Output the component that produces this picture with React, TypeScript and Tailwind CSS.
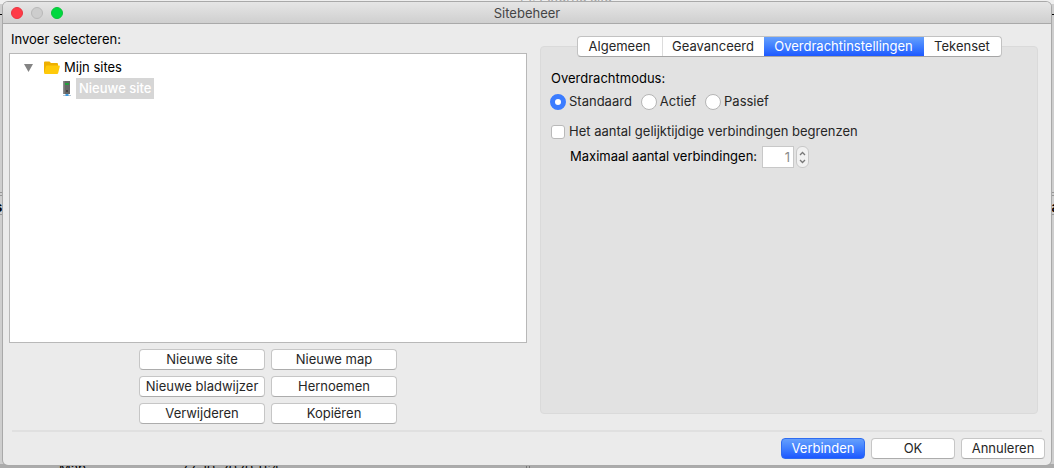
import { useState, type ReactNode } from 'react';

const TABS = [
  { label: 'Algemeen', width: 'w-[85px]' },
  { label: 'Geavanceerd', width: 'w-[101px]' },
  { label: 'Overdrachtinstellingen', width: 'w-[160px]' },
  { label: 'Tekenset', width: 'w-[77px]' },
];

const SITE_ACTIONS = ['Nieuwe site', 'Nieuwe map', 'Nieuwe bladwijzer', 'Hernoemen', 'Verwijderen', 'Kopiëren'];

const MODES = ['Standaard', 'Actief', 'Passief'];

function PushButton({ primary = false, width, children }: { primary?: boolean; width: string; children: ReactNode }) {
  return (
    <button
      type="button"
      className={`${width} flex h-[21px] items-center justify-center rounded border whitespace-nowrap ${
        primary
          ? 'border-[#2f6cf0] bg-linear-to-b from-[#659ffc] to-[#1e57ff] text-white'
          : 'border-[#c6c6c6] border-b-[#acacac] bg-white text-[#262626]'
      }`}
    >
      {children}
    </button>
  );
}

function FolderIcon() {
  return (
    <svg width="16" height="14" viewBox="0 0 16 14" aria-hidden="true">
      <path d="M1 .5h4.500l1.500 1.500H13q1 0 1 1V12H1q-1 0-1-1V1.500q0-1 1-1z" fill="#eeb000" />
      <path d="M3 4.500h12q1 0 .8 1l-1.600 6.500q-.2 1-1.200 1H1q-1 0-.8-1l1.600-6.500q.2-1 1.200-1z" fill="#ffca0a" />
    </svg>
  );
}

function ServerIcon() {
  return (
    <svg width="10" height="16" viewBox="0 0 10 16" aria-hidden="true">
      <path d="M1 0h7v13H1z" fill="#666" />
      <path d="M1 0h1.500v13H1z" fill="#8c8c8c" />
      <path d="M3 2h4v2H3z" fill="#23a03c" />
      <path d="M4 9h2v2H4z" fill="#444" />
      <path d="M1 14.500h8" stroke="#b4c4d2" />
      <path d="M3.500 13h3v2h-3z" fill="#3c9ae0" />
    </svg>
  );
}

// Sliver of the main window that stays visible around the dialog
function Backdrop() {
  return (
    <div className="absolute inset-0 overflow-hidden bg-[#cecece]" aria-hidden="true">
      <div className="absolute inset-x-0 top-0 h-1 bg-[#efefef]" />
      <div className="absolute inset-x-0 top-[14px] h-px bg-black" />
      <div className="absolute inset-x-0 top-[192px] h-1 border-y border-[#979797]" />
      <div className="absolute inset-x-0 top-[214px] h-px bg-[#979797]" />
      <div className="absolute inset-x-0 bottom-0 h-1 bg-[#ababab]" />
      <span className="absolute -top-3 left-[520px] text-[#a0a0a0]">□: Externe site</span>
      <span className="absolute top-[198px] -left-[5px] font-bold text-black">s</span>
      <span className="absolute top-[198px] -right-[5px] font-bold text-black">a</span>
      <span className="absolute -bottom-[10px] left-[59px] text-black">Map</span>
      <span className="absolute -bottom-[10px] left-[180px] text-black">22-10-2020 11:4</span>
      <div className="absolute bottom-0 left-[526px] h-1 w-1 border-x border-[#777]" />
    </div>
  );
}

function SiteList() {
  return (
    <section className="flex flex-col">
      <h2 className="ml-[2px] h-[18px] leading-[18px] text-black">Invoer selecteren:</h2>
      <div className="mt-[5px] flex-1 border border-[#b8b8b8] bg-white pt-1 text-black">
        <ul>
          <li>
            <div className="flex h-5 items-center">
              <svg className="ml-[14px]" width="10" height="8" viewBox="0 0 10 8" aria-hidden="true">
                <path d="M0 0h9L4.500 8z" fill="#848484" />
              </svg>
              <span className="mr-1 ml-[10px]">
                <FolderIcon />
              </span>
              Mijn sites
            </div>
            <ul>
              <li className="flex h-[21px] items-center">
                <span className="mr-1 ml-[52px]">
                  <ServerIcon />
                </span>
                <span className="h-[21px] bg-[#d6d6d6] px-[3px] leading-[21px] font-medium text-white">Nieuwe site</span>
              </li>
            </ul>
          </li>
        </ul>
      </div>
      <div className="mx-auto mt-[6px] grid grid-cols-2 gap-[6px]">
        {SITE_ACTIONS.map((action) => (
          <PushButton key={action} width="w-[126px]">
            {action}
          </PushButton>
        ))}
      </div>
    </section>
  );
}

function TransferSettings() {
  const [mode, setMode] = useState('Standaard');
  const [limited, setLimited] = useState(false);
  const [max, setMax] = useState('1');

  return (
    <div className="px-[9px] pt-3">
      <fieldset>
        <legend className="h-5 pl-px leading-5 text-black">Overdrachtmodus:</legend>
        <div className="mt-1 flex h-5 items-center gap-[9px]">
          {MODES.map((m) => (
            <label key={m} className="flex items-center gap-[3px]">
              <input
                type="radio"
                name="mode"
                checked={mode === m}
                onChange={() => setMode(m)}
                className="size-4 appearance-none rounded-full border border-[#b5b5b5] bg-white checked:border-[5px] checked:border-[#3b7cff]"
              />
              {m}
            </label>
          ))}
        </div>
      </fieldset>
      <label className="mt-[10px] flex h-5 items-center gap-1 pl-px">
        <input
          type="checkbox"
          checked={limited}
          onChange={(e) => setLimited(e.target.checked)}
          className="size-[14px] appearance-none rounded-[3px] border border-[#b9b9b9] bg-white checked:bg-[#3b7cff]"
        />
        Het aantal gelijktijdige verbindingen begrenzen
      </label>
      <div className="mt-1 flex h-[22px] items-center pl-5">
        <label htmlFor="max" className="mr-[5px] text-black">
          Maximaal aantal verbindingen:
        </label>
        <input
          id="max"
          type="text"
          value={max}
          disabled={!limited}
          onChange={(e) => setMax(e.target.value)}
          className="h-[22px] w-8 border border-[#c8c8c8] bg-white pr-[3px] text-right text-[#8a8a8a]"
        />
        <div className="ml-[2px] flex h-[22px] w-[13px] flex-col overflow-hidden rounded-[6px] border border-[#c8c8c8] bg-[#f1f1f1] py-[2px] text-[#777]">
          <button type="button" aria-label="Meer" disabled={!limited} className="flex flex-1 items-center justify-center">
            <svg width="7" height="5" viewBox="0 0 7 5" fill="none" stroke="currentColor" strokeWidth="1.300">
              <path d="M1 4l2.500-2.500L6 4" />
            </svg>
          </button>
          <button type="button" aria-label="Minder" disabled={!limited} className="flex flex-1 items-center justify-center">
            <svg width="7" height="5" viewBox="0 0 7 5" fill="none" stroke="currentColor" strokeWidth="1.300">
              <path d="M1 1l2.500 2.500L6 1" />
            </svg>
          </button>
        </div>
      </div>
    </div>
  );
}

export default function App() {
  const [tab, setTab] = useState(2);

  return (
    <div className="relative flex min-h-screen flex-col px-[3px] pt-[2px] pb-[3px] font-['Inter','Liberation_Sans',sans-serif] text-[13px] text-[#262626]">
      <Backdrop />
      <div className="relative flex flex-1 flex-col overflow-hidden rounded-[5px] bg-[#ebebeb] shadow-[0_0_0_1px_#a9a9a9]">
        {/* Title bar */}
        <header className="grid h-[22px] grid-cols-[1fr_auto_1fr] items-center border-b border-[#a9a9a9] bg-linear-to-b from-[#e6e6e6] to-[#cfcfcf]">
          <div className="flex gap-2 pl-2">
            <button type="button" aria-label="Sluiten" className="size-3 rounded-full border border-[#ea3440] bg-[#ff3b47]" />
            <button type="button" aria-label="Minimaliseren" className="size-3 rounded-full border border-[#b8b8b8] bg-[#cdcdcd]" />
            <button type="button" aria-label="Zoomen" className="size-3 rounded-full border border-[#0cc23a] bg-[#00d83f]" />
          </div>
          <h1 className="pt-[2px] text-[#454545]">Sitebeheer</h1>
        </header>

        <main className="grid flex-1 grid-cols-[518fr_498fr] gap-[13px] pt-[6px] pr-[13px] pb-[6px] pl-[6px]">
          <SiteList />
          <section className="flex flex-col pt-[6px] pb-[10px]">
            <div role="tablist" className="z-10 -mb-[11px] flex h-[21px] self-center overflow-hidden rounded border border-[#c2c2c2] border-b-[#a5a5a5] bg-white">
              {TABS.map((t, i) => (
                <button
                  key={t.label}
                  type="button"
                  role="tab"
                  aria-selected={tab === i}
                  onClick={() => setTab(i)}
                  className={`${t.width} ${
                    tab === i ? 'bg-linear-to-b from-[#659ffc] to-[#1e57ff] text-white' : i === 0 ? 'border-r border-[#dcdcdc]' : ''
                  }`}
                >
                  {t.label}
                </button>
              ))}
            </div>
            <div className="flex-1 rounded border border-[#dadada] bg-[#e2e2e2] pt-[9px]">
              <TransferSettings />
            </div>
          </section>
        </main>

        <footer className="px-[6px] pb-[6px]">
          <hr className="mx-[3px] border-t-2 border-[#e0e0e0]" />
          <div className="mt-[6px] flex justify-end gap-[6px]">
            <PushButton primary width="w-[84px]">
              Verbinden
            </PushButton>
            <PushButton width="w-[84px]">OK</PushButton>
            <PushButton width="w-[84px]">Annuleren</PushButton>
          </div>
        </footer>
      </div>
    </div>
  );
}
